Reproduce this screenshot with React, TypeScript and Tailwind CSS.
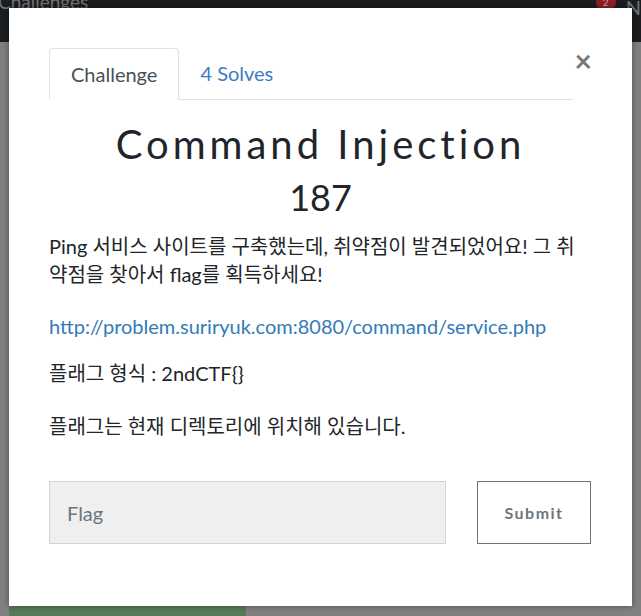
export default function App() {
  return (
    <div
      className="relative h-[616px] overflow-hidden bg-[#808080]"
      style={{ fontFamily: "Lato, 'Noto Sans CJK KR', sans-serif" }}
    >
      {/* page behind the backdrop */}
      <div className="flex h-[42px] items-start justify-between overflow-hidden bg-[#1b1e21]">
        <span className="-ml-[2px] -mt-[12px] text-[19px] text-[#707376]">Challenges</span>
        <div className="flex items-start gap-[10px] -mt-[8px]">
          <span className="flex h-[20px] w-[20px] items-center justify-center rounded-full bg-[#8e1d25] text-[10px] text-[#c9a3a5]">
            2
          </span>
          <span className="text-[20px] text-[#707376]">N</span>
        </div>
      </div>
      <div className="mt-[564px] ml-[9px] h-[20px] w-[237px] bg-[#587a58]" />

      {/* modal */}
      <div className="absolute left-[9px] top-[8px] h-[598px] w-[623px] bg-white px-[40px] pt-[40px] shadow-[0_0_6px_rgba(0,0,0,0.4)]">
        <div className="flex items-start">
          <ul className="flex flex-1 border-b border-[#dee2e6]">
            <li className="-mb-px rounded-t-[4px] border border-b-white border-[#dee2e6] bg-white px-[21px] py-[10px] text-[20px] leading-[30px] text-[#495057]">
              Challenge
            </li>
            <li className="px-[21px] py-[10px] text-[20px] leading-[30px] text-[#3b7dc4]">
              4 Solves
            </li>
          </ul>
          <button className="w-[19px] text-right text-[30px] font-bold leading-[24px] text-[#777]">
            ×
          </button>
        </div>

        <h2 className="mt-[20px] text-center text-[40px] leading-[48px] tracking-[4px] text-[#212529]">
          Command Injection
        </h2>
        <h3 className="mt-[7px] text-center text-[36px] leading-[44px] text-[#212529]">187</h3>

        <div className="mt-[13px] text-[20px] leading-[28px] text-[#212529]">
          <p>Ping 서비스 사이트를 구축했는데, 취약점이 발견되었어요! 그 취약점을 찾아서 flag를 획득하세요!</p>
          <p className="mt-[24px]">
            <a className="text-[#337ab7]">http://problem.suriryuk.com:8080/command/service.php</a>
          </p>
          <p className="mt-[19px]">플래그 형식 : 2ndCTF{"{}"}</p>
          <p className="mt-[25px]">플래그는 현재 디렉토리에 위치해 있습니다.</p>
        </div>

        <div className="mt-[41px] flex gap-[31px]">
          <div className="flex h-[63px] w-[397px] items-center border border-[#ced4da] bg-[#efefef] px-[17px] text-[20px] text-[#6c757d]">
            Flag
          </div>
          <button className="h-[63px] w-[114px] border border-[#6c757d] bg-white text-[16px] font-bold tracking-[1.5px] text-[#6c757d]">
            Submit
          </button>
        </div>
      </div>
    </div>
  );
}
